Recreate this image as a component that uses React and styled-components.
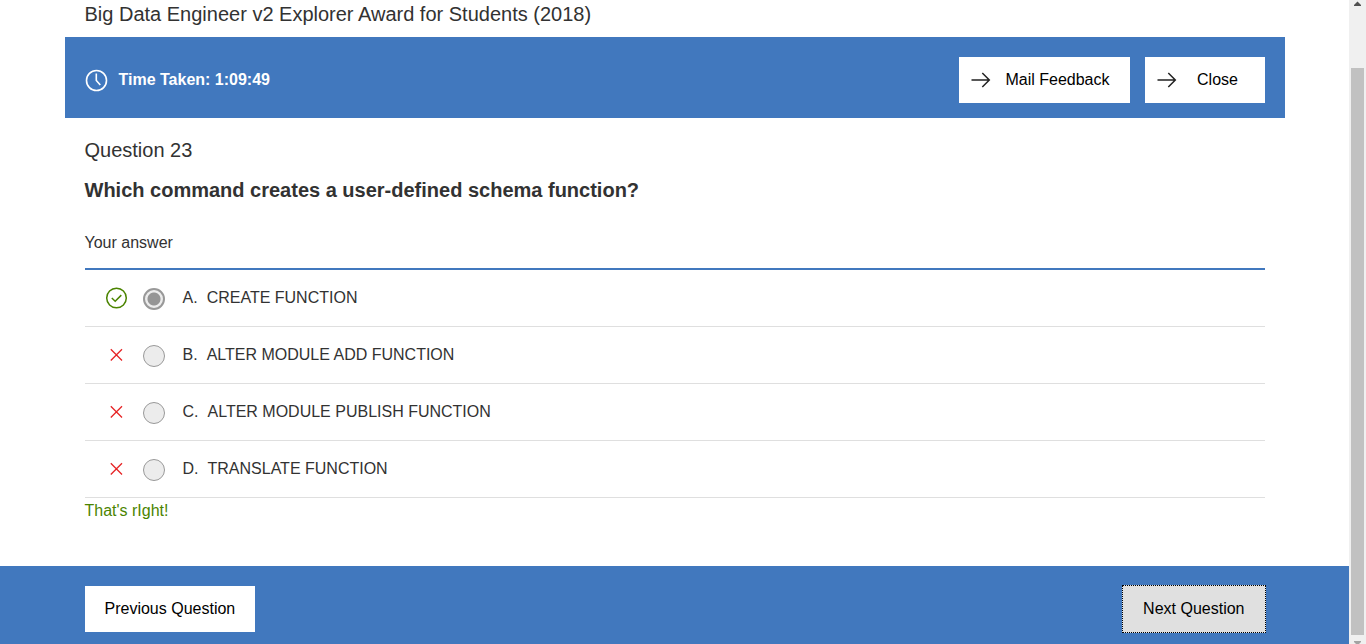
import React from "react";
import styled, { createGlobalStyle } from "styled-components";

const BLUE = "#4178be";

const GlobalStyle = createGlobalStyle`
  *, *::before, *::after { box-sizing: border-box; }
  body {
    margin: 0;
    background: #fff;
    color: #323232;
    font: 16px/24px "Liberation Sans", Arial, sans-serif;
  }
`;

const Viewport = styled.div`
  display: flex;
  min-height: 100vh;
`;

const Page = styled.div`
  flex: 1;
  min-width: 0;
  display: flex;
  flex-direction: column;
`;

const Container = styled.div`
  width: 100%;
  max-width: 1220px;
  margin: 0 auto;
`;

const Main = styled.main`
  flex: 1;
`;

const CourseTitle = styled.h1`
  margin: 0;
  padding: 2px 20px 11px;
  font-size: 20px;
  line-height: 24px;
  font-weight: 400;
`;

const TimerBar = styled.div`
  display: flex;
  align-items: center;
  justify-content: space-between;
  padding: 20px 20px 15px;
  background: ${BLUE};
`;

const Timer = styled.div`
  display: flex;
  align-items: center;
  gap: 11px;
  color: #fff;
  font-weight: 700;
`;

const Actions = styled.div`
  display: flex;
  gap: 15px;
`;

const Button = styled.button`
  display: flex;
  align-items: center;
  justify-content: center;
  height: 46px;
  min-width: 120px;
  padding: 0 20px;
  border: 0;
  background: #fff;
  color: #000;
  font: inherit;
  cursor: pointer;
`;

const ArrowButton = styled(Button)`
  justify-content: flex-start;
  padding: 0 20px 0 12px;
`;

const ButtonLabel = styled.span`
  flex: 1;
  padding-left: 14px;
  text-align: center;
`;

const NextButton = styled(Button)`
  height: 48px;
  border: 1px dotted #000;
  background: #e0e0e0;
`;

const Question = styled.section`
  padding: 20px 20px 0;
`;

const QuestionNumber = styled.h2`
  margin: 0 0 16px;
  font-size: 20px;
  line-height: 24px;
  font-weight: 400;
`;

const QuestionText = styled.h3`
  margin: 0;
  font-size: 20px;
  line-height: 24px;
  font-weight: 700;
`;

const Answers = styled.fieldset`
  min-width: 0;
  margin: 0;
  padding: 29px 0 0;
  border: 0;
`;

const AnswersLegend = styled.legend`
  float: left;
  width: 100%;
  padding: 0 0 13px;
  border-bottom: 2px solid ${BLUE};
`;

const AnswerRow = styled.label`
  clear: both;
  display: flex;
  align-items: center;
  height: 57px;
  padding-left: 20px;
  border-bottom: 1px solid #dfdfdf;
`;

const Radio = styled.input`
  appearance: none;
  width: 22px;
  height: 22px;
  margin: 2px 18px 0 15px;
  border: ${(p) => (p.checked ? 2 : 1)}px solid #999;
  border-radius: 50%;
  background: ${(p) =>
    p.checked ? "radial-gradient(circle, #959595 6px, #ececec 7px)" : "#ececec"};
`;

const Letter = styled.span`
  margin-right: 9px;
`;

const Feedback = styled.p`
  margin: 0;
  padding-top: 1px;
  color: #4b8400;
`;

const Footer = styled.footer`
  background: ${BLUE};
`;

const FooterNav = styled(Container)`
  display: flex;
  align-items: center;
  justify-content: space-between;
  padding: 19px 19px 11px 20px;
`;

const ScrollTrack = styled.div`
  flex: none;
  width: 17px;
  display: flex;
  flex-direction: column;
  align-items: center;
  background: #f0f0f0;
`;

const ScrollThumb = styled.div`
  flex: 1;
  width: 13px;
  margin: 60px 0 1px;
  background: #c1c1c1;
`;

const ClockIcon = () => (
  <svg width="23" height="23" viewBox="0 0 23 23" fill="none" stroke="#fff" strokeWidth="1.6" aria-hidden="true">
    <circle cx="11.5" cy="11.5" r="10" />
    <path d="M11.3 4.5v7l4 4.600" />
  </svg>
);

const ArrowIcon = () => (
  <svg width="20" height="16" viewBox="0 0 20 16" fill="none" stroke="#222" strokeWidth="1.5" aria-hidden="true">
    <path d="M0.500 8h18M11.300 1l7 7-7 7" />
  </svg>
);

const CorrectIcon = () => (
  <svg width="23" height="23" viewBox="0 0 23 23" fill="none" stroke="#4b8400" strokeWidth="1.5" role="img" aria-label="Correct">
    <circle cx="11.5" cy="11" r="9.8" />
    <path d="M6.800 11l3.400 3.300 6.100-6.200" />
  </svg>
);

const WrongIcon = () => (
  <svg width="23" height="23" viewBox="0 0 23 23" fill="none" stroke="#e62325" strokeWidth="1.3" role="img" aria-label="Incorrect">
    <path d="M5.800 5.300l11.200 11.200M17 5.300L5.800 16.500" />
  </svg>
);

const ScrollArrow = ({ down }) => (
  <svg width="17" height="8" viewBox="0 0 17 8" aria-hidden="true">
    <path d={down ? "M5 5h7v1l-3.500 3.500L5 6z" : "M5 6h7V5L8.500 1.500 5 5z"} fill={down ? "#a3a3a3" : "#505050"} />
  </svg>
);

const ANSWERS = [
  { letter: "A.", text: "CREATE FUNCTION", correct: true },
  { letter: "B.", text: "ALTER MODULE ADD FUNCTION" },
  { letter: "C.", text: "ALTER MODULE PUBLISH FUNCTION" },
  { letter: "D.", text: "TRANSLATE FUNCTION" },
];

export default function App() {
  return (
    <>
      <GlobalStyle />
      <Viewport>
        <Page>
          <Main>
            <Container>
              <CourseTitle>Big Data Engineer v2 Explorer Award for Students (2018)</CourseTitle>
              <TimerBar>
                <Timer>
                  <ClockIcon />
                  <span>Time Taken: 1:09:49</span>
                </Timer>
                <Actions>
                  <ArrowButton type="button">
                    <ArrowIcon />
                    <ButtonLabel>Mail Feedback</ButtonLabel>
                  </ArrowButton>
                  <ArrowButton type="button">
                    <ArrowIcon />
                    <ButtonLabel>Close</ButtonLabel>
                  </ArrowButton>
                </Actions>
              </TimerBar>
              <Question>
                <QuestionNumber>Question 23</QuestionNumber>
                <QuestionText>Which command creates a user-defined schema function?</QuestionText>
                <Answers>
                  <AnswersLegend>Your answer</AnswersLegend>
                  {ANSWERS.map((a) => (
                    <AnswerRow key={a.letter}>
                      {a.correct ? <CorrectIcon /> : <WrongIcon />}
                      <Radio type="radio" name="answer" checked={!!a.correct} readOnly />
                      <Letter>{a.letter}</Letter>
                      <span>{a.text}</span>
                    </AnswerRow>
                  ))}
                </Answers>
                <Feedback>That's rIght!</Feedback>
              </Question>
            </Container>
          </Main>
          <Footer>
            <FooterNav as="nav">
              <Button type="button">Previous Question</Button>
              <NextButton type="button">Next Question</NextButton>
            </FooterNav>
          </Footer>
        </Page>
        <ScrollTrack>
          <ScrollArrow />
          <ScrollThumb />
          <ScrollArrow down />
        </ScrollTrack>
      </Viewport>
    </>
  );
}
